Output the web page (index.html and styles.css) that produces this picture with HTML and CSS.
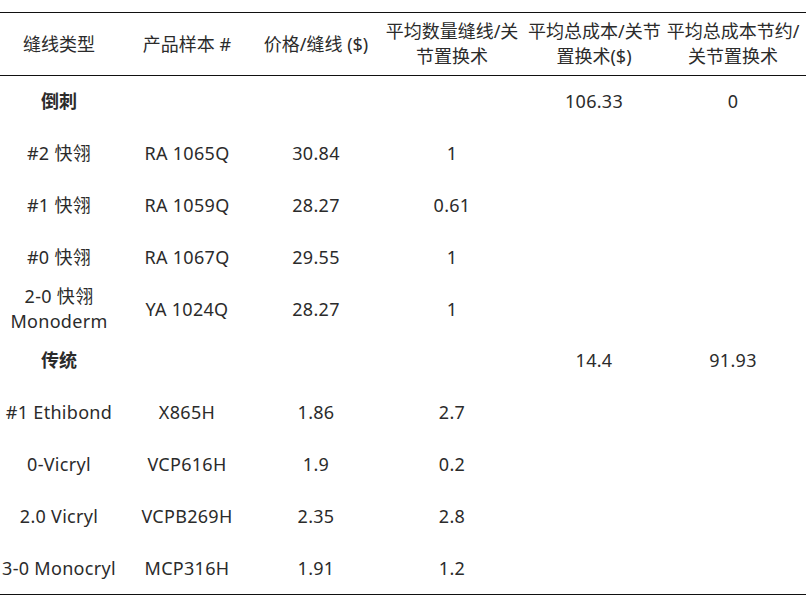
FILE: index.html
```html
<!DOCTYPE html>
<html lang="zh">
<head>
<meta charset="utf-8">
<link rel="stylesheet" href="styles.css">
</head>
<body>
<table class="cost">
  <colgroup>
    <col class="c1"><col class="c2"><col class="c3"><col class="c4"><col class="c5"><col class="c6">
  </colgroup>
  <thead>
    <tr>
      <th>缝线类型</th>
      <th>产品样本 #</th>
      <th>价格/缝线 ($)</th>
      <th>平均数量缝线/关<br>节置换术</th>
      <th>平均总成本/关节<br>置换术($)</th>
      <th>平均总成本节约/<br>关节置换术</th>
    </tr>
  </thead>
  <tbody>
    <tr><td class="group">倒刺</td><td></td><td></td><td></td><td>106.33</td><td>0</td></tr>
    <tr><td>#2 快翎</td><td>RA 1065Q</td><td>30.84</td><td>1</td><td></td><td></td></tr>
    <tr><td>#1 快翎</td><td>RA 1059Q</td><td>28.27</td><td>0.61</td><td></td><td></td></tr>
    <tr><td>#0 快翎</td><td>RA 1067Q</td><td>29.55</td><td>1</td><td></td><td></td></tr>
    <tr><td>2-0 快翎<br>Monoderm</td><td>YA 1024Q</td><td>28.27</td><td>1</td><td></td><td></td></tr>
    <tr><td class="group">传统</td><td></td><td></td><td></td><td>14.4</td><td>91.93</td></tr>
    <tr><td>#1 Ethibond</td><td>X865H</td><td>1.86</td><td>2.7</td><td></td><td></td></tr>
    <tr><td>0-Vicryl</td><td>VCP616H</td><td>1.9</td><td>0.2</td><td></td><td></td></tr>
    <tr><td>2.0 Vicryl</td><td>VCPB269H</td><td>2.35</td><td>2.8</td><td></td><td></td></tr>
    <tr><td>3-0 Monocryl</td><td>MCP316H</td><td>1.91</td><td>1.2</td><td></td><td></td></tr>
  </tbody>
</table>
</body>
</html>
```
FILE: styles.css
```css
html, body {
  margin: 0;
  padding: 0;
  background: #fff;
}

body {
  font-family: "Noto Sans", "Noto Sans CJK SC", sans-serif;
  color: #2b2b2b;
  font-size: 18px;
}

.cost {
  margin-top: 12px;
  width: 806px;
  table-layout: fixed;
  border-collapse: collapse;
  border-top: 1px solid #111;
  border-bottom: 1px solid #111;
}

.c1 { width: 118px; }
.c2 { width: 138px; }
.c3 { width: 120px; }
.c4 { width: 152px; }
.c5 { width: 132px; }
.c6 { width: 146px; }

.cost th {
  font-weight: normal;
  height: 62px;
  padding: 0;
  line-height: 25px;
  text-align: center;
  vertical-align: middle;
  border-bottom: 1px solid #111;
  white-space: nowrap;
}

.cost td {
  height: 51.8px;
  padding: 0;
  line-height: 25px;
  text-align: center;
  vertical-align: middle;
  white-space: nowrap;
  letter-spacing: 0.3px;
}

.cost td.group {
  font-weight: bold;
  letter-spacing: 0;
}
```
